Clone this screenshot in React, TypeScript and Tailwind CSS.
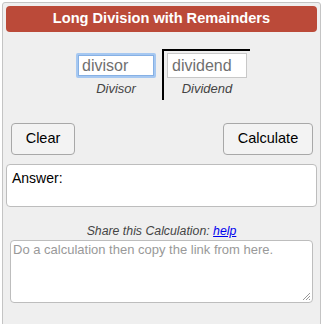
export default function App() {
  return (
    <div className="w-[324px] h-[324px] bg-white overflow-hidden" style={{ fontFamily: '"Liberation Sans", Arial, Helvetica, sans-serif' }}>
      <div className="ml-[2px] mt-[2px] w-[319px] h-[330px] border border-[#c4c4c4] rounded-t-[3px] bg-[#efefef] pt-[3px] px-[3px]">
        <div className="h-[26px] rounded-[4px] bg-[#bb4a39] flex items-center justify-center text-white font-bold text-[14.6px]">
          Long Division with Remainders
        </div>
        <div className="flex mt-[17px] ml-[70px]">
          <div className="flex flex-col items-center mt-[4px]">
            <div className="w-[80px] h-[25px] rounded-[2px] bg-[#a6c8f1] p-[2px]">
              <div className="w-full h-full bg-white border border-[#86b0e4] flex items-center pl-[3px] text-[16px] text-[#707070]">
                divisor
              </div>
            </div>
            <div className="mt-[3px] text-[13px] italic text-[#444] leading-[15px]">Divisor</div>
          </div>
          <div className="ml-[6px] w-[88px] h-[51px] border-l-2 border-t-2 border-black pl-[3px] pt-[2px]">
            <div className="w-[80px] h-[25px] bg-white border border-[#c8c8c8] flex items-center pl-[4px] text-[16px] text-[#707070]">
              dividend
            </div>
            <div className="w-[80px] text-center mt-[3px] text-[13px] italic text-[#444] leading-[15px]">Dividend</div>
          </div>
        </div>
        <div className="flex justify-between mt-[23px] px-[5px] pr-[4px]">
          <button className="w-[64px] h-[32px] rounded-[4px] border border-[#a8a8a8] bg-[#f3f3f3] text-[14.5px] text-black">Clear</button>
          <button className="w-[90px] h-[32px] rounded-[4px] border border-[#a8a8a8] bg-[#f3f3f3] text-[14.5px] text-black">Calculate</button>
        </div>
        <div className="mt-[9px] w-[311px] h-[43px] bg-white border border-[#bdbdbd] rounded-[4px] px-[5px] pt-[5px] text-[14px] leading-[16px] text-black">
          Answer:
        </div>
        <div className="mt-[17px] text-center text-[12.3px] italic text-[#444] leading-[15px]">
          Share this Calculation: <span className="text-[#0000ee] underline">help</span>
        </div>
        <div className="mt-[1px] ml-[4px] w-[303px] h-[63px] bg-white border border-[#bdbdbd] rounded-[4px] px-[2px] pt-[1px] text-[13px] leading-[16px] text-[#999] relative">
          Do a calculation then copy the link from here.
          <svg className="absolute right-[1px] bottom-[1px]" width="9" height="9" viewBox="0 0 9 9">
            <line x1="8" y1="1" x2="1" y2="8" stroke="#999" strokeWidth="1" />
            <line x1="8" y1="4" x2="4" y2="8" stroke="#999" strokeWidth="1" />
            <line x1="8" y1="7" x2="7" y2="8" stroke="#999" strokeWidth="1" />
          </svg>
        </div>
      </div>
    </div>
  );
}
